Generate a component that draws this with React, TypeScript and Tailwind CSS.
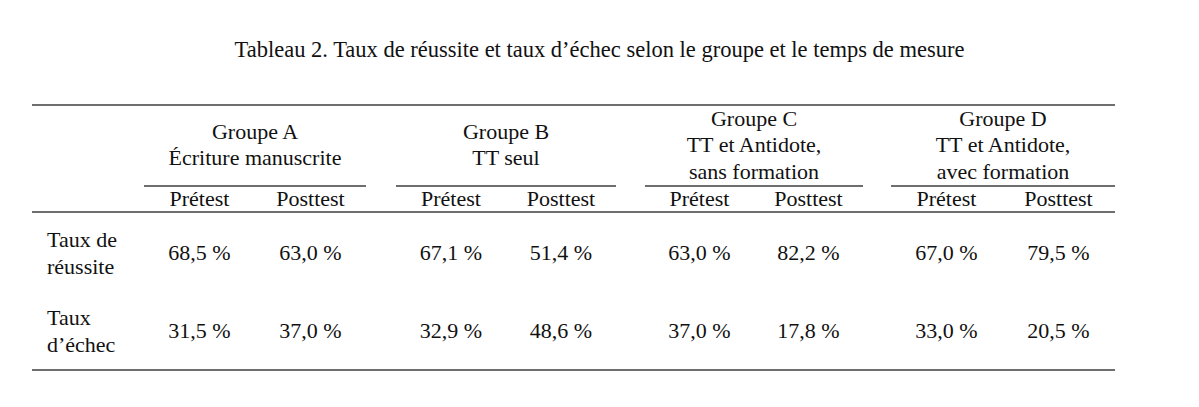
const groups = [
  { lines: ['Groupe A', 'Écriture manuscrite'] },
  { lines: ['Groupe B', 'TT seul'] },
  { lines: ['Groupe C', 'TT et Antidote,', 'sans formation'] },
  { lines: ['Groupe D', 'TT et Antidote,', 'avec formation'] },
];

const rows = [
  { label: ['Taux de', 'réussite'], values: ['68,5 %', '63,0 %', '67,1 %', '51,4 %', '63,0 %', '82,2 %', '67,0 %', '79,5 %'], h: 'h-[81px]' },
  { label: ['Taux', 'd’échec'], values: ['31,5 %', '37,0 %', '32,9 %', '48,6 %', '37,0 %', '17,8 %', '33,0 %', '20,5 %'], h: 'h-[75px]' },
];

const gridCols =
  'grid grid-cols-[112px_111px_111px_30px_110px_110px_29px_109px_109px_28px_111px_113px]';

function Rule() {
  return <div className="col-span-12 h-[2px] bg-[#6e6e6e]" />;
}

export default function App() {
  return (
    <div
      className="w-[1199px] h-[407px] bg-white text-[#111] text-[22px] leading-[26.5px]"
      style={{ fontFamily: '"Liberation Serif", "Times New Roman", serif' }}
    >
      <h1 className="pt-[37px] text-center text-[22.5px] font-normal">
        Tableau 2. Taux de réussite et taux d’échec selon le groupe et le temps de mesure
      </h1>

      <div className={`${gridCols} ml-[32px] mt-[40px] w-[1083px]`}>
        <Rule />

        {/* group headings */}
        <div className="h-[77px]" />
        {groups.map((g, i) => (
          <div key={i} className="contents">
            <div className="col-span-2 flex flex-col items-center justify-center border-b-2 border-[#6e6e6e] text-center">
              {g.lines.map((l) => (
                <div key={l}>{l}</div>
              ))}
            </div>
            {i < groups.length - 1 && <div />}
          </div>
        ))}

        {/* Prétest / Posttest */}
        <div className="h-[24px]" />
        {groups.map((_, i) => (
          <div key={i} className="contents">
            <div className="flex h-[24px] items-center justify-center leading-[24px]">Prétest</div>
            <div className="flex h-[24px] items-center justify-center leading-[24px]">Posttest</div>
            {i < groups.length - 1 && <div />}
          </div>
        ))}

        <Rule />

        {rows.map((r) => (
          <div key={r.label[0]} className="contents">
            <div className={`${r.h} flex flex-col justify-center pl-[15px]`}>
              {r.label.map((l) => (
                <div key={l}>{l}</div>
              ))}
            </div>
            {groups.map((_, i) => (
              <div key={i} className="contents">
                <div className="flex items-center justify-center">{r.values[i * 2]}</div>
                <div className="flex items-center justify-center">{r.values[i * 2 + 1]}</div>
                {i < groups.length - 1 && <div />}
              </div>
            ))}
          </div>
        ))}

        <Rule />
      </div>
    </div>
  );
}
